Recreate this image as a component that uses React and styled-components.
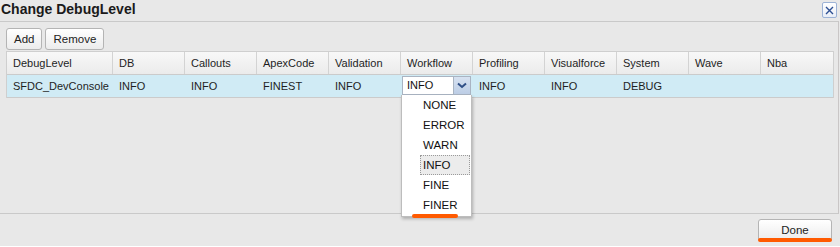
import React from 'react';
import styled, { createGlobalStyle } from 'styled-components';

const GlobalStyle = createGlobalStyle`
  body {
    margin: 0;
    background: #e8e8e8;
    font-family: "Liberation Sans", Tahoma, sans-serif;
  }
`;

const columns = [ 'DebugLevel', 'DB', 'Callouts', 'ApexCode', 'Validation', 'Workflow', 'Profiling', 'Visualforce', 'System', 'Wave', 'Nba' ];
const row = [ 'SFDC_DevConsole', 'INFO', 'INFO', 'FINEST', 'INFO', null, 'INFO', 'INFO', 'DEBUG', '', '' ];
const levels = [ 'NONE', 'ERROR', 'WARN', 'INFO', 'FINE', 'FINER' ];

const Window = styled.div`
  width: 840px;
  height: 247px;
  display: flex;
  flex-direction: column;
  background: #e8e8e8;
  overflow: hidden;
`;

const TitleBar = styled.div`
  height: 21px;
  display: flex;
  align-items: flex-start;
  justify-content: space-between;
  padding-right: 3px;
`;

const Title = styled.h1`
  margin: 0;
  padding-left: 1px;
  font-family: "Liberation Sans", Tahoma, sans-serif;
  font-weight: 700;
  font-size: 14px;
  line-height: 19px;
  color: #1a1a1a;
`;

const CloseButton = styled.div`
  margin-top: 2px;
  width: 13px;
  height: 14px;
  border: 1px solid #9db3d6;
  border-radius: 2px;
  background: linear-gradient(#ffffff, #e9eef7);
  display: flex;
  align-items: center;
  justify-content: center;
`;

const Panel = styled.div`
  height: 189px;
  border-top: 1px solid #c9c9c9;
  border-right: 1px solid #c9c6c6;
  border-bottom: 1px solid #c9c9c9;
  margin-right: 1px;
  padding: 6px 6px 0 6px;
  position: relative;
`;

const Toolbar = styled.div`
  display: flex;
  gap: 3px;
  margin-bottom: 1px;
`;

const Button = styled.button`
  height: 22px;
  padding: 0 ${ props => props.pad || '7px' };
  width: ${ props => props.width || 'auto' };
  border: 1px solid #b4b4b4;
  border-radius: 3px;
  background: linear-gradient(#ffffff, #ececec);
  font-family: "Liberation Sans", Tahoma, sans-serif;
  font-size: 11.5px;
  color: #222;
  line-height: 20px;
`;

const Grid = styled.div`
  width: 826px;
  border-left: 1px solid #cfcfcf;
  border-right: 1px solid #cfcfcf;
`;

const Row = styled.div`
  display: grid;
  grid-template-columns: 106px repeat(10, 72px);
  height: ${ props => props.height };
  background: ${ props => props.head ? 'linear-gradient(#f8f8f8, #ebebeb)' : '#d0ebf5' };
  border-top: 1px solid ${ props => props.head ? '#cfcfcf' : 'transparent' };
  border-bottom: 1px solid #cbcbcb;
`;

const Cell = styled.div`
  position: relative;
  display: flex;
  align-items: center;
  padding-left: 6px;
  font-size: 11px;
  color: #1e1e1e;
  white-space: nowrap;
  border-right: ${ props => props.head ? '1px solid #d3d3d3' : 'none' };
  &:last-child {
    border-right: none;
  }
`;

const Select = styled.div`
  position: absolute;
  left: 1px;
  top: 0;
  width: 69px;
  height: 19px;
  display: flex;
  background: #fff;
  border: 1px solid #a9b4c2;
  box-sizing: border-box;
`;

const SelectValue = styled.div`
  flex: 1;
  padding-left: 4px;
  font-size: 11px;
  line-height: 17px;
  color: #111;
`;

const SelectArrow = styled.div`
  width: 16px;
  background: linear-gradient(#d7e2f1, #bccde5);
  border-left: 1px solid #a9b4c2;
  display: flex;
  align-items: center;
  justify-content: center;
`;

const Menu = styled.div`
  position: absolute;
  left: 0;
  top: 19px;
  width: 71px;
  background: #fff;
  border: 1px solid #bdbdbd;
  border-top: none;
  box-sizing: border-box;
  box-shadow: 1px 2px 3px rgba(0, 0, 0, 0.25);
  z-index: 5;
  padding-bottom: 1px;
`;

const MenuItem = styled.div`
  height: 20px;
  box-sizing: border-box;
  margin: 0 1px 0 18px;
  padding-left: 2px;
  font-size: 11.5px;
  line-height: 19px;
  color: #111;
  border: 1px ${ props => props.active ? 'dotted #9a9a9a' : 'solid transparent' };
  background: ${ props => props.active ? '#ececec' : 'transparent' };
`;

const Mark = styled.div`
  position: absolute;
  height: 4px;
  border-radius: 2px;
  background: #ff5a00;
  left: ${ props => props.left };
  width: ${ props => props.width };
  bottom: ${ props => props.bottom };
`;

const Footer = styled.div`
  height: 32px;
  display: flex;
  justify-content: flex-end;
  align-items: flex-start;
  padding: 5px 8px 0 0;
  box-sizing: border-box;
`;

const DoneWrap = styled.div`
  position: relative;
`;

const BottomEdge = styled.div`
  height: 1px;
  background: #ffffff;
`;

const Frame = styled.div`
  flex: 1;
  background: #c8c8c8;
`;

const Chevron = () => (
  <svg width="10" height="7" viewBox="0 0 10 7">
    <path d="M1 1.5 L5 5 L9 1.5" fill="none" stroke="#2f4f86" strokeWidth="2" />
  </svg>
);

const CloseIcon = () => (
  <svg width="9" height="9" viewBox="0 0 9 9">
    <path d="M1 1 L8 8 M8 1 L1 8" stroke="#2d4f92" strokeWidth="1.4" />
  </svg>
);

export default class App extends React.Component {
  renderDropdown = () => {
    return (
      <>
        <Select>
          <SelectValue>INFO</SelectValue>
          <SelectArrow><Chevron /></SelectArrow>
        </Select>
        <Menu>
          { levels.map( level => (
            <MenuItem key={ level } active={ level === 'INFO' }>{ level }</MenuItem>
          ) ) }
          <Mark left="10px" width="46px" bottom="-2px" />
        </Menu>
      </>
    );
  }

  render() {
    return (
      <Window>
        <GlobalStyle />
        <TitleBar>
          <Title>Change DebugLevel</Title>
          <CloseButton><CloseIcon /></CloseButton>
        </TitleBar>
        <Panel>
          <Toolbar>
            <Button>Add</Button>
            <Button>Remove</Button>
          </Toolbar>
          <Grid>
            <Row head height="22px">
              { columns.map( c => <Cell head key={ c }>{ c }</Cell> ) }
            </Row>
            <Row height="21px">
              { row.map( ( v, i ) => (
                <Cell key={ i }>{ v === null ? this.renderDropdown() : v }</Cell>
              ) ) }
            </Row>
          </Grid>
        </Panel>
        <Footer>
          <DoneWrap>
            <Button width="74px">Done</Button>
            <Mark left="0" width="74px" bottom="-1px" />
          </DoneWrap>
        </Footer>
        <BottomEdge />
        <Frame />
      </Window>
    );
  }
}
